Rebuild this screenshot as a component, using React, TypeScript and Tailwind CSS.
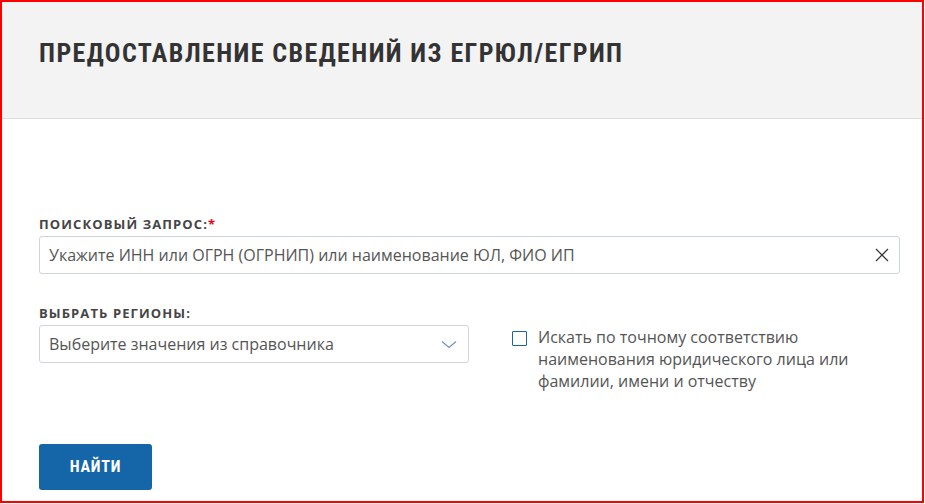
import React from "react";

const condensed = { fontFamily: '"Roboto Condensed", Roboto, sans-serif' };

export default function App() {
  return (
    <div className="w-[924px] h-[503px] border-2 border-[#ff0000] bg-white overflow-hidden font-['Open_Sans',sans-serif]">
      {/* Header */}
      <div className="h-[117px] bg-[#f3f3f3] border-b border-[#dddddd] flex items-center px-[37px]">
        <h1
          style={condensed}
          className="text-[26px] font-bold uppercase tracking-[1.4px] text-[#333333] leading-none pb-[14px]"
        >
          Предоставление сведений из ЕГРЮЛ/ЕГРИП
        </h1>
      </div>

      <div className="px-[37px] pt-[97px]">
        {/* Search query */}
        <label className="block text-[13px] font-bold uppercase tracking-[1.1px] text-[#454545] leading-[16px]">
          Поисковый запрос:<span className="text-[#e30613]">*</span>
        </label>
        <div className="mt-[4px] h-[38px] w-[861px] border border-[#cfd5dd] rounded-[3px] flex items-center pl-[9px] pr-[9px]">
          <span className="flex-1 text-[16px] text-[#555555]">
            Укажите ИНН или ОГРН (ОГРНИП) или наименование ЮЛ, ФИО ИП
          </span>
          <svg width="14" height="14" viewBox="0 0 14 14" className="mr-[1px]">
            <path d="M1 1L13 13M13 1L1 13" stroke="#3a3a3a" strokeWidth="1.3" fill="none" />
          </svg>
        </div>

        {/* Regions + checkbox */}
        <div className="mt-[31px] flex">
          <div className="w-[430px]">
            <label className="block text-[13px] font-bold uppercase tracking-[1.1px] text-[#454545] leading-[16px]">
              Выбрать регионы:
            </label>
            <div className="mt-[4px] h-[38px] border border-[#cfd5dd] rounded-[3px] flex items-center pl-[9px] pr-[10px]">
              <span className="flex-1 text-[16px] text-[#555555]">Выберите значения из справочника</span>
              <svg width="16" height="9" viewBox="0 0 16 9" className="mr-[1px]">
                <path d="M1 1.5L8 7.5L15 1.5" stroke="#6f95c4" strokeWidth="1.3" fill="none" />
              </svg>
            </div>
          </div>
          <div className="ml-[43px] pt-[21px] flex items-start gap-[11px]">
            <div className="mt-[5px] w-[15px] h-[15px] border-[1.5px] border-[#1a64ab] rounded-[1px] shrink-0" />
            <p className="text-[16px] leading-[22px] text-[#555555] w-[340px]">
              Искать по точному соответствию наименования юридического лица или фамилии, имени и отчеству
            </p>
          </div>
        </div>

        {/* Submit */}
        <button
          style={condensed}
          className="mt-[52px] w-[113px] h-[46px] bg-[#1565a9] rounded-[3px] text-white text-[16px] font-bold uppercase tracking-[0.8px]"
        >
          Найти
        </button>
      </div>
    </div>
  );
}
